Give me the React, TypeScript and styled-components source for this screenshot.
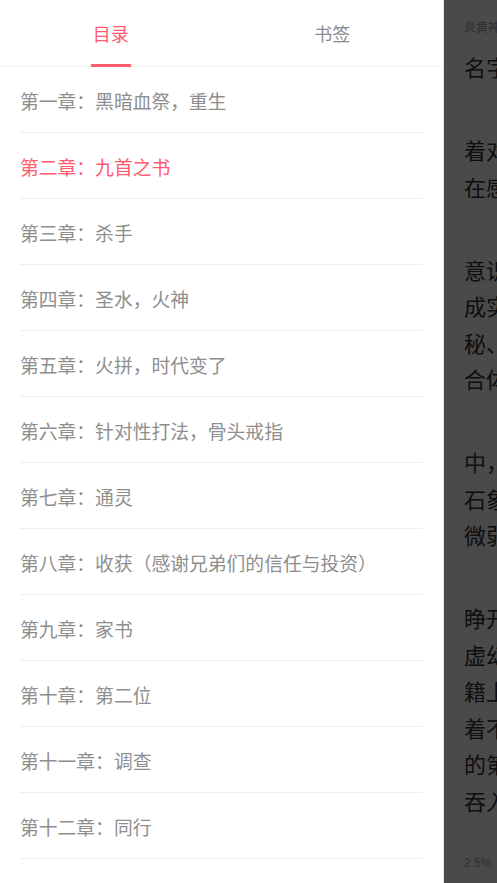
import React from "react";
import styled, { createGlobalStyle } from "styled-components";

const Global = createGlobalStyle`
  html, body { margin: 0; padding: 0; background: #4a4a4a; }
  body { font-family: "Noto Sans CJK SC", "Noto Sans", sans-serif; }
  * { box-sizing: border-box; }
`;

const Screen = styled.div`
  width: 497px;
  height: 883px;
  display: flex;
  overflow: hidden;
  position: relative;
`;

const Drawer = styled.aside`
  width: 444px;
  flex: 0 0 444px;
  height: 100%;
  background: #ffffff;
  display: flex;
  flex-direction: column;
  border-right: 1px solid #e6e6e6;
`;

const Tabs = styled.div`
  display: flex;
  height: 67px;
  border-bottom: 1px solid #f1f1f1;
  flex: 0 0 auto;
`;

const Tab = styled.div<{ $active?: boolean }>`
  flex: 1;
  position: relative;
  display: flex;
  align-items: center;
  justify-content: center;
  padding-bottom: 1px;
  font-size: 18px;
  color: ${(p) => (p.$active ? "#ff5a6e" : "#8c8c8c")};
`;

const Indicator = styled.span`
  position: absolute;
  left: 50%;
  bottom: -1px;
  width: 40px;
  height: 3px;
  margin-left: -20px;
  background: #ff5a6e;
`;

const List = styled.ul`
  list-style: none;
  margin: 0;
  padding: 0 20px;
  flex: 1;
  overflow: hidden;
`;

const Item = styled.li<{ $active?: boolean }>`
  height: 66px;
  display: flex;
  align-items: center;
  padding-top: 1px;
  border-bottom: 1px solid #efefef;
  font-size: 18.8px;
  color: ${(p) => (p.$active ? "#ff5a6e" : "#8e8e8e")};
  white-space: nowrap;
`;

const Reader = styled.main`
  flex: 1;
  position: relative;
  height: 100%;
  background: #f7f7f7;
  overflow: hidden;
  padding: 14px 0 0 20px;
`;

const ReaderTitle = styled.div`
  font-size: 12px;
  color: #999;
  white-space: nowrap;
  height: 26px;
  line-height: 26px;
  margin-bottom: 8px;
`;

const Para = styled.p`
  margin: 0 0 46.5px 0;
  font-size: 22px;
  line-height: 36.5px;
  color: #333;
  white-space: nowrap;
`;

const Line = styled.span`
  display: block;
`;

const Progress = styled.div`
  position: absolute;
  left: 20px;
  bottom: 13px;
  font-size: 12px;
  color: #999;
  font-family: "Liberation Sans", sans-serif;
  white-space: nowrap;
`;

const Mask = styled.div`
  position: absolute;
  inset: 0;
  background: rgba(0, 0, 0, 0.7);
`;

const chapters = [
  "第一章：黑暗血祭，重生",
  "第二章：九首之书",
  "第三章：杀手",
  "第四章：圣水，火神",
  "第五章：火拼，时代变了",
  "第六章：针对性打法，骨头戒指",
  "第七章：通灵",
  "第八章：收获（感谢兄弟们的信任与投资）",
  "第九章：家书",
  "第十章：第二位",
  "第十一章：调查",
  "第十二章：同行",
  "第十三章：交易",
];

const paragraphs = [
  ["名字叫做林默。"],
  ["着对面的人，他", "在感受着一切。"],
  ["意识渐渐清醒", "成实体的力量", "秘、诡异而神", "合体内的血液"],
  ["中，他看到了", "石象上的纹路", "微弱的光芒闪"],
  ["睁开双眼，", "虚幻的景象", "籍上的文字", "着不断翻动", "的第一页上", "吞入了黑暗"],
];

export default function App() {
  return (
    <>
      <Global />
      <Screen>
        <Drawer>
          <Tabs>
            <Tab $active>
              目录
              <Indicator />
            </Tab>
            <Tab>书签</Tab>
          </Tabs>
          <List>
            {chapters.map((c, i) => (
              <Item key={c} $active={i === 1}>
                {c}
              </Item>
            ))}
          </List>
        </Drawer>
        <Reader>
          <ReaderTitle>炎黄神座</ReaderTitle>
          {paragraphs.map((p, i) => (
            <Para key={i}>
              {p.map((l) => (
                <Line key={l}>{l}</Line>
              ))}
            </Para>
          ))}
          <Progress>2.5%</Progress>
          <Mask />
        </Reader>
      </Screen>
    </>
  );
}
